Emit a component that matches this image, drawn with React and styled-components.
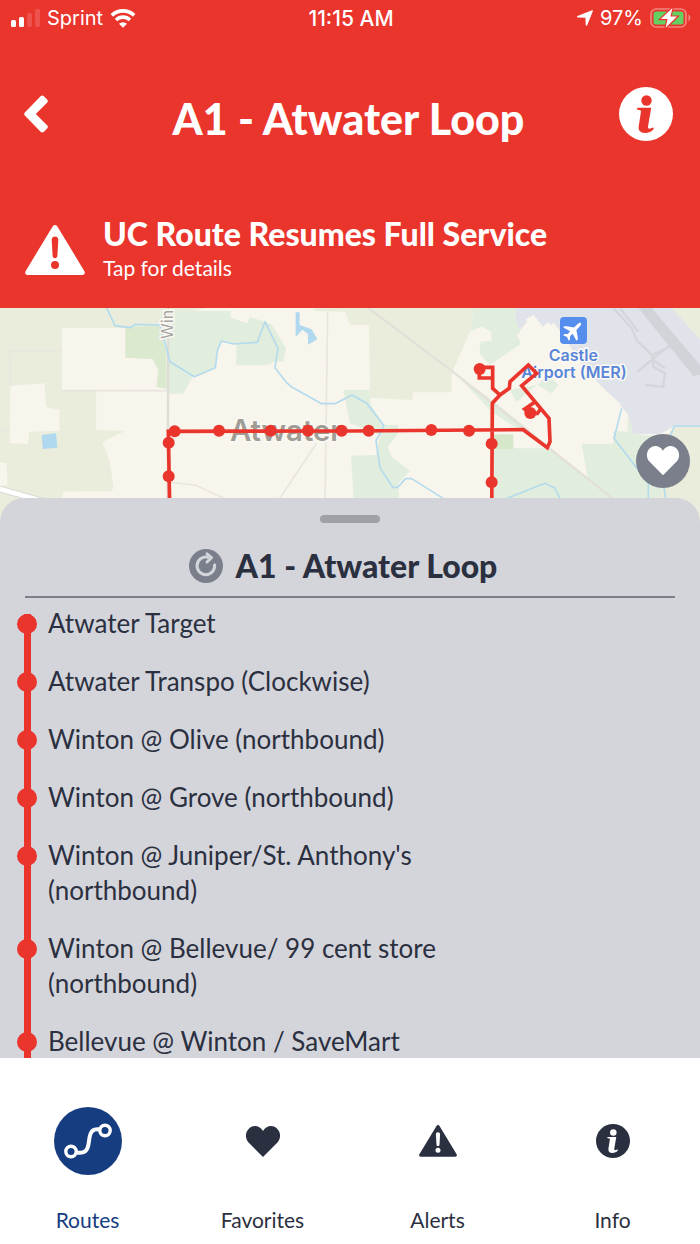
import styled, { createGlobalStyle } from "styled-components";

const COLORS = {
  red: "#ea352d",
  navy: "#163d80",
  ink: "#2b3040",
  slate: "#7a7f8b",
  sheet: "#d4d5db",
  white: "#ffffff",
};

const FONTS = {
  body: '"Lato", sans-serif',
  system: '"Inter", sans-serif',
};

const stops = [
  "Atwater Target",
  "Atwater Transpo (Clockwise)",
  "Winton @ Olive (northbound)",
  "Winton @ Grove (northbound)",
  "Winton @ Juniper/St. Anthony's (northbound)",
  "Winton @ Bellevue/ 99 cent store (northbound)",
  "Bellevue @ Winton / SaveMart",
];

const tabs = [
  { label: "Routes", icon: RoutesIcon, active: true },
  { label: "Favorites", icon: HeartIcon },
  { label: "Alerts", icon: WarningIcon },
  { label: "Info", icon: InfoIcon },
];

const mapStops = [
  [524, 379],
  [506, 413],
  [506, 514],
  [657, 377],
  [812, 377],
  [924, 377],
  [1025, 377],
  [1106, 377],
  [1294, 375],
  [1407, 377],
  [1475, 416],
  [1475, 532],
  [1439, 192],
  [1591, 324],
];

function App() {
  return (
    <Screen>
      <GlobalStyle />
      <Header>
        <StatusBar />
        <TitleRow>
          <IconButton aria-label="Back">
            <BackIcon />
          </IconButton>
          <Title>A1 - Atwater Loop</Title>
          <IconButton aria-label="Route information" $end>
            <InfoIcon size={54} />
          </IconButton>
        </TitleRow>
        <AlertBanner>
          <WarningIcon size={60} />
          <AlertText>
            <AlertTitle>UC Route Resumes Full Service</AlertTitle>
            <AlertHint>Tap for details</AlertHint>
          </AlertText>
        </AlertBanner>
      </Header>
      <MapArea>
        <RouteMap />
        <FavoriteButton aria-label="Add to favorites">
          <HeartIcon size={32} />
        </FavoriteButton>
      </MapArea>
      <Sheet>
        <Handle />
        <SheetHeader>
          <LoopIcon />
          <SheetTitle>A1 - Atwater Loop</SheetTitle>
        </SheetHeader>
        <StopList>
          {stops.map((stop) => (
            <Stop key={stop}>
              <Rail>
                <Dot />
              </Rail>
              <StopName>{stop}</StopName>
            </Stop>
          ))}
        </StopList>
      </Sheet>
      <TabBar>
        {tabs.map(({ label, icon: Icon, active }) => (
          <Tab key={label} $active={active}>
            <TabIcon>
              <Icon />
            </TabIcon>
            {label}
          </Tab>
        ))}
      </TabBar>
    </Screen>
  );
}

function StatusBar() {
  return (
    <StatusRow>
      <StatusGroup>
        <svg width="29" height="18" viewBox="0 0 29 18" fill="currentColor">
          <rect x="0" y="11" width="5" height="7" rx="1.5" />
          <rect x="8" y="8" width="5" height="10" rx="1.5" />
          <rect x="16" y="4" width="5" height="14" rx="1.5" opacity="0.15" />
          <rect x="24" y="0" width="5" height="18" rx="1.5" opacity="0.15" />
        </svg>
        Sprint
        <svg width="26" height="19" viewBox="0 0 26 19" fill="none">
          <path
            d="M1.8 6.4a16 16 0 0 1 22.4 0M6 11a10 10 0 0 1 14 0"
            stroke="currentColor"
            strokeWidth="3.6"
          />
          <path d="M9 14.8a6 6 0 0 1 8 0L13 18.8z" fill="currentColor" />
        </svg>
      </StatusGroup>
      <StatusTime>11:15 AM</StatusTime>
      <StatusGroup $end>
        <svg width="16" height="16" viewBox="0 0 16 16" fill="currentColor">
          <path d="M15.6.3c.3.2.4.5.3.8L10.2 15.2c-.3.8-1.4.7-1.5-.2L8.4 7.8.8 7.5c-.9 0-1-1.100-.3-1.500L14.900.2c.3-.1.5-.1.7.1z" />
        </svg>
        97%
        <svg width="41" height="20" viewBox="0 0 41 20" fill="none">
          <rect
            x="1"
            y="1"
            width="35"
            height="18"
            rx="5"
            stroke="currentColor"
            strokeWidth="1.6"
            opacity="0.4"
          />
          <path d="M38.400 6.600c2.600 1 2.600 5.600 0 6.600z" fill="currentColor" opacity="0.4" />
          <rect x="3.5" y="3.5" width="30" height="13" rx="2.5" fill="#62d062" />
          <path
            d="M22.500 0 10.800 11h6.800l-2 8.800L27 8.600h-6.600z"
            fill="currentColor"
            stroke={COLORS.red}
            strokeWidth="2.4"
            paintOrder="stroke"
          />
        </svg>
      </StatusGroup>
    </StatusRow>
  );
}

function BackIcon() {
  return (
    <svg width="24" height="38" viewBox="0 0 24 38" fill="currentColor">
      <path d="M.8 17.600 16.600 1.200c1-1 2.300-1 3.300 0l3.200 3.200c1 1 1 2.300 0 3.300L11.800 19l11.300 11.300c1 1 1 2.300 0 3.300l-3.200 3.200c-1 1-2.300 1-3.300 0L.8 20.400c-.8-.8-.8-2 0-2.800z" />
    </svg>
  );
}

function InfoIcon({ size = 34 }) {
  return (
    <svg width={size} height={size} viewBox="0 0 54 54">
      <mask id={`info-${size}`}>
        <circle cx="27" cy="27" r="27" fill="#fff" />
        <circle cx="27.5" cy="13.5" r="5.2" fill="#000" />
        <path
          d="M19 20.800H32.200L29 39.500c-.2 1.600.7 2.400 2 2.200 1.200-.2 2.100-1.100 3-1.100.9.100 1 1.100.3 1.900-1.800 2.300-5 3.500-8.600 3.400-4.400-.2-6.600-2.500-6-6.700l2.300-14.700c.1-.8-.2-1.200-1-1.300l-2.200-.4c-1.300-.4-1.300-1.800.2-2z"
          fill="#000"
        />
      </mask>
      <rect width="54" height="54" fill="currentColor" mask={`url(#info-${size})`} />
    </svg>
  );
}

function WarningIcon({ size = 38 }) {
  return (
    <svg width={size} height={(size * 50) / 60} viewBox="0 0 60 50">
      <path
        fill="currentColor"
        fillRule="evenodd"
        d="M27.600 1.400c1.200-1.900 3.600-1.900 4.800 0l27 44.800c1 1.900.2 3.800-2 3.800H2.600c-2.200 0-3-1.900-2-3.800zM30 11.500c-2.200 0-3.400 1.400-3.300 3.600l.9 15.600c.1 1.600.9 2.500 2.400 2.500s2.300-.9 2.400-2.500l.9-15.600c.1-2.200-1.100-3.600-3.300-3.600zM30 36a4 4 0 1 0 0 8 4 4 0 0 0 0-8z"
      />
    </svg>
  );
}

function HeartIcon({ size = 34 }) {
  return (
    <svg width={size} height={(size * 31) / 34} viewBox="0 0 34 31" fill="currentColor">
      <path d="M17 5C13.500-.8 7.200-1.200 3.300 2.200-1 6-1 12.300 2.300 16.200L17 31l14.700-14.800C35 12.300 35 6 30.700 2.200 26.800-1.200 20.500-.8 17 5z" />
    </svg>
  );
}

function LoopIcon() {
  return (
    <svg width="34" height="34" viewBox="0 0 34 34">
      <circle cx="17" cy="17" r="17" fill={COLORS.slate} />
      <path
        d="M18.500 8.200A8.800 8.800 0 1 0 25.600 16"
        fill="none"
        stroke={COLORS.sheet}
        strokeWidth="3"
        strokeLinecap="round"
      />
      <path
        d="m18 4.800 4.500 3.900-4.500 4.300"
        fill="none"
        stroke={COLORS.sheet}
        strokeWidth="3"
        strokeLinecap="round"
        strokeLinejoin="round"
      />
    </svg>
  );
}

function RoutesIcon() {
  return (
    <svg width="68" height="68" viewBox="0 0 68 68" fill="none">
      <circle cx="34" cy="34" r="34" fill={COLORS.navy} />
      <g stroke={COLORS.white} strokeWidth="4">
        <circle cx="17" cy="44.5" r="5.2" strokeWidth="3.4" />
        <circle cx="51" cy="23.5" r="5.2" strokeWidth="3.4" />
        <path d="M22 45.500C32 47 34 43 35 34S38 21.500 46 22.500" />
      </g>
    </svg>
  );
}

function RouteMap() {
  return (
    <MapSvg viewBox="0 9 2100 642" preserveAspectRatio="xMidYMin slice" role="img" aria-label="Route map">
      <rect y="9" width="2100" height="642" fill="#f8f5ec" />

      {/* farmland and parks */}
      <g fill="#eaeddb">
        <path d="M0 9H615L480 45 500 255 289 260V375L375 378 307 412 328 465 341 545 335 558 190 560 160 651H0z" />
        <path d="M940 9H1420L1412 75 1355 205V262H1240L1236 285 1110 278 1107 60H1050L1035 20 945 18z" />
        <path d="M2020 365H2100V651H1940L1920 520z" />
      </g>
      <g fill="#f8f5ec">
        <path d="M186 69H376V158L458 162 475 195 470 245 500 250V255H186z" />
        <path d="M31 242 134 235 138 305 178 315V377L88 380 84 417 29 415z" />
        <path d="M289 260H505V375H289zM0 472 20 474 22 540 0 545z" />
      </g>
      <path d="M376 69 480 60 500 150V252L470 245 475 195 458 162 376 158z" fill="#dbe9cf" />
      <g fill="#e1eddd">
        <path d="M490 18H692V38L743 55 750 36 815 58 858 130 850 170 830 168 800 181H708L710 118 665 108 650 140 646 188 577 218 549 266H507V150L480 45z" />
        <path d="M1030 255H1108L1112 300 1152 360H1195L1193 388 1163 425 1175 455 1230 498 1195 535 1200 651H1065L1053 452 1128 450 1140 390 1050 355z" />
        <path d="M1420 9H1547V50L1570 75 1550 90 1565 115 1470 180 1438 145 1442 110 1474 108V80L1445 65 1412 78z" />
        <path d="M1365 205 1475 285 1570 360 1650 430 1850 590V651H1480V430H1640L1475 320z" />
        <path d="M1745 416H1840V378L1883 380V330L1900 387 1990 395 1980 651H1850L1770 560z" />
        <path d="M1530 255 1610 240 1550 290zM1645 210 1675 240 1655 265 1612 240z" />
      </g>
      <path d="M1475 388H1540V432H1475z" fill="#d5e8c9" />

      {/* airport grounds */}
      <path
        d="M1547 9H2100V365L2020 365 1980 387H1900L1885 330 1865 305 1800 240 1740 170 1685 85 1660 52 1640 80 1600 30 1560 75 1547 50z"
        fill="#e0e3ea"
      />
      <path d="M1560 75 1583 55 1578 42 1602 30 1628 65 1645 52 1662 68 1650 85 1700 150 1800 240 1865 300 1780 300 1560 120z" fill="#f8f5ec" />
      <path d="M2015 9H2100V103z" fill="#eaeddb" />
      <path d="M1915 9H1955L2100 180V210L2080 213z" fill="#d0d3d8" />
      <g stroke="#d3d6db" fill="none" strokeWidth="7">
        <path d="M1840 9 1895 70 1910 105 1955 150 2010 125M1860 9 1915 80M1912 200 2010 120M1955 150 1960 185 1995 205 1990 245 1935 240M1960 165 1995 190" />
      </g>

      {/* roads */}
      <g stroke="#e9e6df" fill="none" strokeWidth="5">
        <path d="M186 257H503M30 140H186M30 140V242M983 20 975 600M950 415 820 609M515 533 585 540 690 588M0 377H29" />
        <path d="M505 9 503 600" stroke="#dfdcd6" strokeWidth="7" />
        <path d="M1105 9 1365 205 1850 590" stroke="#e3e0d9" strokeWidth="7" />
      </g>
      <path d="M0 552 170 600" stroke="#d8d8d4" strokeWidth="20" />
      <path d="M0 552 170 600" stroke="#ffffff" strokeWidth="14" />

      {/* water */}
      <g stroke="#b3dbee" fill="none" strokeWidth="5" strokeLinejoin="round">
        <path d="M320 9 345 62 390 68 408 58 480 60 510 170 583 215 646 188 652 138 664 108 700 117 772 112 795 50 834 130 825 188 860 233 875 246 965 296H1005L1056 270 1100 295 1152 362 1128 407 1140 488 1178 547H1193L1217 521H1235L1345 590" />
        <path d="M1865 310 1842 400 1945 535V651M2100 363H2023L2000 420 1980 470 2000 600M1510 584 1635 535 1665 550 1690 600" />
      </g>
      <g fill="#b0d9ef">
        <path d="M887 22H899V60L935 73 952 103 924 119V87L907 74 887 97z" />
        <path d="M125 390 168 385 172 428 128 432z" />
      </g>

      {/* place labels */}
      <MapLabel $size={48} $color="#a6a49f" transform="translate(519 102) rotate(-90)">
        Win
      </MapLabel>
      <MapLabel $size={88} $weight={600} $color="#a09d96" x="690" y="408">
        Atwater
      </MapLabel>
      <rect x="1680" y="36" width="81" height="81" rx="12" fill="#568eed" />
      <path
        transform="translate(1720 77) rotate(45)"
        d="M0-32C4-32 5-25 5-18V-8L28 8V15L5 8V19L12 26V31L0 27-12 31V26L-5 19V8L-28 15V8L-5-8V-18C-5-25-4-32 0-32z"
        fill="#fff"
      />
      <MapLabel $size={48} $weight={600} $color="#5985d8" textAnchor="middle" x="1720" y="168">
        Castle
      </MapLabel>
      <MapLabel $size={48} $weight={600} $color="#5985d8" textAnchor="middle" x="1722" y="219">
        Airport (MER)
      </MapLabel>

      {/* bus line */}
      <g stroke={COLORS.red} fill="none" strokeWidth="11">
        <path d="M510 651 505 379 1050 378 1570 374 1642 428 1650 410 1647 340 1565 242 1610 205 1585 180 1530 230 1528 250 1500 270 1477 295 1475 651" />
        <path d="M1500 270 1478 250V187H1438V219H1478M1606 290 1574 312 1591 325 1612 325 1622 312" />
      </g>
      {mapStops.map(([x, y]) => (
        <circle key={`${x}-${y}`} cx={x} cy={y} r="18" fill={COLORS.red} />
      ))}
    </MapSvg>
  );
}

const GlobalStyle = createGlobalStyle`
  * {
    box-sizing: border-box;
  }

  body {
    margin: 0;
    font-family: ${FONTS.body};
    color: ${COLORS.ink};
  }

  button {
    border: 0;
    padding: 0;
    background: none;
    color: inherit;
    font: inherit;
    cursor: pointer;
  }

  svg {
    display: block;
    flex-shrink: 0;
  }
`;

const Screen = styled.div`
  display: flex;
  flex-direction: column;
  height: 100vh;
  background-color: ${COLORS.white};
`;

const Header = styled.header`
  flex-shrink: 0;
  background-color: ${COLORS.red};
  color: ${COLORS.white};
`;

const StatusRow = styled.div`
  display: grid;
  grid-template-columns: 1fr auto 1fr;
  align-items: center;
  height: 36px;
  padding: 0 9px 0 11px;
  font-family: ${FONTS.system};
  font-size: 20px;
`;

const StatusGroup = styled.div`
  display: flex;
  align-items: center;
  justify-content: ${(props) => (props.$end ? "flex-end" : "flex-start")};
  gap: 7px;
`;

const StatusTime = styled.span`
  font-size: 21px;
  font-weight: 500;
`;

const TitleRow = styled.div`
  display: grid;
  grid-template-columns: 1fr auto 1fr;
  align-items: center;
  height: 156px;
  padding: 0 27px 0 24px;
`;

const IconButton = styled.button`
  display: flex;
  justify-self: ${(props) => (props.$end ? "end" : "start")};
`;

const Title = styled.h1`
  margin: 10px 0 0;
  font-size: 43px;
  line-height: 50px;
  font-weight: 900;
`;

const AlertBanner = styled.button`
  display: flex;
  align-items: center;
  gap: 18px;
  width: 100%;
  height: 116px;
  padding: 0 25px;
  text-align: left;
`;

const AlertText = styled.span`
  padding-bottom: 4px;
`;

const AlertTitle = styled.strong`
  display: block;
  font-size: 32px;
  line-height: 40px;
  font-weight: 900;
`;

const AlertHint = styled.span`
  display: block;
  font-size: 21px;
  line-height: 28px;
`;

const MapArea = styled.div`
  position: relative;
  flex-shrink: 0;
  height: 214px;
  overflow: hidden;
`;

const MapSvg = styled.svg`
  width: 100%;
  height: 100%;
`;

const MapLabel = styled.text`
  font-family: ${FONTS.system};
  font-size: ${(props) => props.$size}px;
  font-weight: ${(props) => props.$weight || 400};
  fill: ${(props) => props.$color};
  stroke: #fbf9f4;
  stroke-width: 9px;
  stroke-linejoin: round;
  paint-order: stroke;
`;

const FavoriteButton = styled.button`
  position: absolute;
  right: 10px;
  top: 126px;
  display: flex;
  align-items: center;
  justify-content: center;
  width: 54px;
  height: 54px;
  border-radius: 50%;
  background-color: ${COLORS.slate};
  color: ${COLORS.white};
`;

const Sheet = styled.section`
  position: relative;
  display: flex;
  flex: 1;
  flex-direction: column;
  min-height: 0;
  margin-top: -24px;
  padding-top: 17px;
  border-radius: 24px 24px 0 0;
  background-color: ${COLORS.sheet};
`;

const Handle = styled.div`
  flex-shrink: 0;
  align-self: center;
  width: 60px;
  height: 8px;
  border-radius: 4px;
  background-color: #a0a1a5;
`;

const SheetHeader = styled.div`
  display: flex;
  flex-shrink: 0;
  align-items: center;
  justify-content: center;
  gap: 13px;
  height: 75px;
  margin: 0 25px;
  padding: 12px 14px 0 0;
  border-bottom: 2px solid ${COLORS.slate};
`;

const SheetTitle = styled.h2`
  margin: 0;
  font-size: 32px;
  line-height: 40px;
  font-weight: 900;
`;

const StopList = styled.ul`
  flex: 1;
  min-height: 0;
  margin: 0;
  padding: 8px 17px 0;
  overflow-y: auto;
  list-style: none;
  scrollbar-width: none;
`;

const Stop = styled.li`
  display: flex;
  gap: 11px;
`;

const Rail = styled.div`
  flex-shrink: 0;
  width: 20px;
  margin: 8px 0 -8px;
  background: linear-gradient(${COLORS.red}, ${COLORS.red}) center / 7px 100% no-repeat;
`;

const Dot = styled.div`
  height: 20px;
  border-radius: 50%;
  background-color: ${COLORS.red};
`;

const StopName = styled.span`
  flex: 0 1 450px;
  padding-bottom: 23px;
  font-size: 26px;
  line-height: 35px;
`;

const TabBar = styled.nav`
  display: grid;
  flex-shrink: 0;
  grid-template-columns: repeat(4, 1fr);
  padding: 49px 0 12px;
  background-color: ${COLORS.white};
`;

const Tab = styled.button`
  display: flex;
  flex-direction: column;
  align-items: center;
  gap: 33px;
  color: ${(props) => (props.$active ? COLORS.navy : COLORS.ink)};
  font-size: 21px;
  line-height: 24px;
`;

const TabIcon = styled.span`
  display: flex;
  align-items: center;
  justify-content: center;
  height: 68px;
`;

export default App;
